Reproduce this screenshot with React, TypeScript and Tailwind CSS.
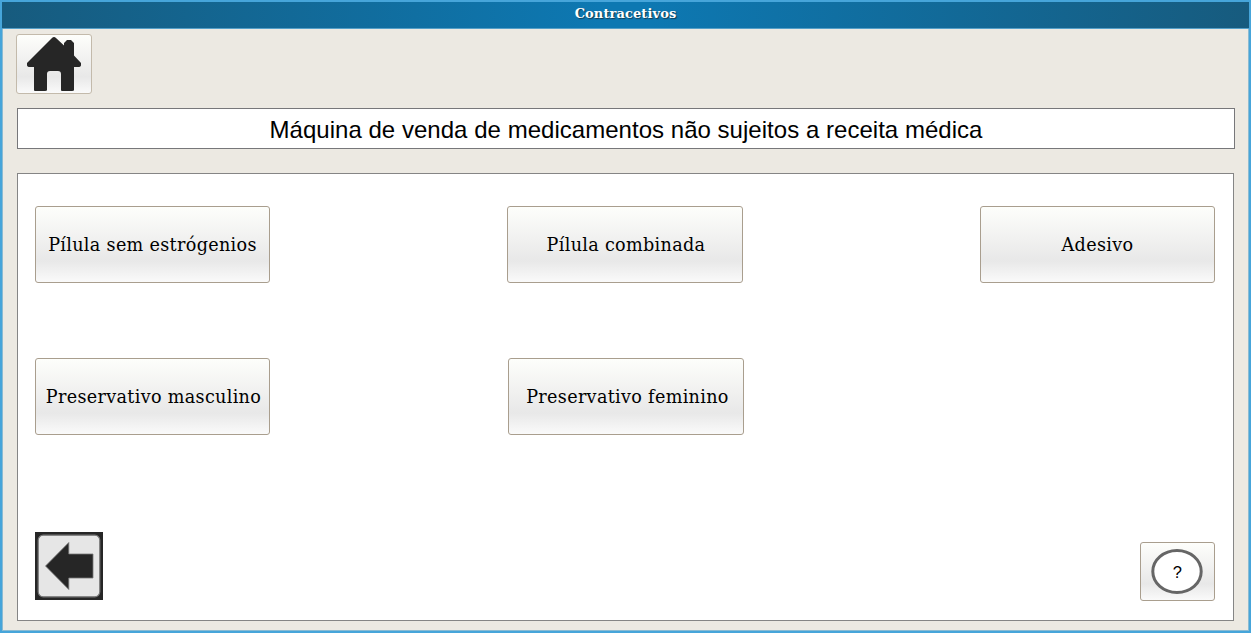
import type { ReactNode } from 'react';

const face =
  'rounded-[3px] border bg-[linear-gradient(180deg,#fdfefb_0%,#f1f1f0_42%,#e8e8e8_72%,#fafafa_100%)]';

function ProductButton({ children, className = '' }: { children: ReactNode; className?: string }) {
  return (
    <button
      className={`flex h-[77px] items-center justify-center border-[#a99e8e] whitespace-nowrap font-['DejaVu_Serif',serif] text-[17.6px] leading-[22px] tracking-[0.32px] text-black ${face} ${className}`}
    >
      {children}
    </button>
  );
}

function HomeIcon() {
  return (
    <svg width="56" height="56" viewBox="0 0 56 56" fill="#262626">
      <path d="M26 2Q28 0 30 2L38 9.5V7L41 4H45L48 7V19.5L55 27V29Q55 31 52 31H48V54Q48 55 46 55H36Q35 55 35 54V38Q35 35 32 35H24Q21 35 21 38V54Q21 55 19 55H9Q8 55 8 54V31H4Q1 31 1 29V27Z" />
    </svg>
  );
}

function BackIcon() {
  return (
    <svg width="68" height="68" viewBox="0 0 68 68">
      <rect width="68" height="68" fill="#262626" />
      <rect x="3.2" y="3.2" width="61.6" height="61.6" rx="5" fill="#e6e6e6" stroke="#777" strokeWidth="1.2" />
      <path d="M10.5 34L33.8 10.5V22H58V46H33.8V57.5Z" fill="#262626" stroke="#777777" strokeWidth="0.8" />
    </svg>
  );
}

function HelpIcon() {
  return (
    <svg width="52" height="46" viewBox="0 0 52 46" className="mr-[2px] mb-px">
      <ellipse cx="26" cy="23.5" rx="24.2" ry="21" fill="#fff" stroke="#666" strokeWidth="3" />
      <text x="26.3" y="29.5" textAnchor="middle" fontSize="16.5" fontFamily="Liberation Sans, sans-serif">
        ?
      </text>
    </svg>
  );
}

export default function App() {
  return (
    <div className="flex h-[633px] w-[1251px] flex-col overflow-hidden border-2 border-[#46a5da] bg-[#ece9e2]">
      <header className="flex h-[27px] shrink-0 items-center justify-center border-b border-[#559fc8] bg-[linear-gradient(90deg,#175b7e_0%,#0d78b2_48%,#0d78b2_52%,#175b7e_100%)] pb-[3px]">
        <h1 className="font-['DejaVu_Serif',serif] text-[13px] leading-4 font-bold tracking-[0.1px] text-white [text-shadow:1px_1px_1px_#123c52]">
          Contracetivos
        </h1>
      </header>
      <main className="flex grow flex-col border-x border-b border-[#8abbd3] pt-[5px] pr-[13px] pl-[13px]">
        <button aria-label="Início" className={`flex h-[60px] w-[76px] items-center justify-center border-[#c3baab] ${face}`}>
          <HomeIcon />
        </button>
        <div className="mt-[14px] ml-px flex h-[41px] w-[1218px] shrink-0 items-center justify-center border border-[#77777a] bg-white pt-[3px] font-['Liberation_Sans',sans-serif] text-[24px] leading-7 tracking-[0.03px] text-black">
          Máquina de venda de medicamentos não sujeitos a receita médica
        </div>
        <section className="mt-6 ml-px flex h-[448px] w-[1217px] shrink-0 flex-col justify-between border border-[#858585] bg-white pt-8 pr-[18px] pb-[19px] pl-[17px]">
          <div className="grid grid-cols-[235px_236px_235px] justify-between gap-y-[75px]">
            <ProductButton>Pílula sem estrógenios</ProductButton>
            <ProductButton className="pl-[2px]">Pílula combinada</ProductButton>
            <ProductButton>Adesivo</ProductButton>
            <ProductButton className="pl-[2px]">Preservativo masculino</ProductButton>
            <ProductButton className="ml-px -mr-px pl-[3px]">Preservativo feminino</ProductButton>
          </div>
          <div className="flex items-end justify-between">
            <button aria-label="Voltar" className="mb-px h-[68px] w-[68px]">
              <BackIcon />
            </button>
            <button aria-label="Ajuda" className={`flex h-[59px] w-[75px] items-center justify-center border-[#a99e8e] ${face}`}>
              <HelpIcon />
            </button>
          </div>
        </section>
      </main>
    </div>
  );
}
